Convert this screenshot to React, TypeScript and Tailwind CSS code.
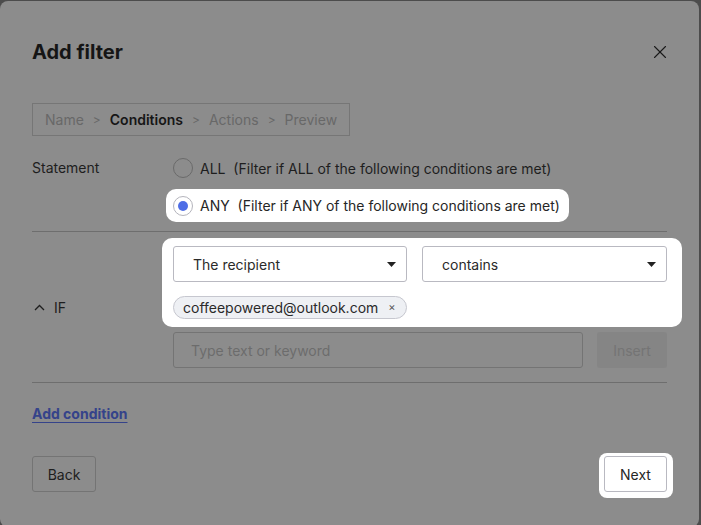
import { X } from "lucide-react";

function Caret() {
  return (
    <svg width="9" height="5" viewBox="0 0 9 5" className="shrink-0">
      <path d="M0 0h9L4.5 5z" fill="#222" />
    </svg>
  );
}

function Radio({ checked, dim }: { checked?: boolean; dim?: boolean }) {
  return (
    <span
      className={`flex h-[20px] w-[20px] shrink-0 items-center justify-center rounded-full border ${
        dim ? "border-[#6a6a6a]" : "border-[#b4b4bc] bg-white"
      }`}
    >
      {checked && <span className="h-[10px] w-[10px] rounded-full bg-[#4f6ee6]" />}
    </span>
  );
}

function Select({ label, className }: { label: string; className: string }) {
  return (
    <div
      className={`flex h-[36px] items-center justify-between rounded-[3px] border border-[#b9b9c1] bg-white pl-[19px] pr-[10px] text-[14px] text-[#2a2a2a] ${className}`}
    >
      <span>{label}</span>
      <Caret />
    </div>
  );
}

export default function App() {
  return (
    <div className="h-[525px] w-[701px] overflow-hidden bg-[#4c4c4c] font-['Inter',sans-serif]">
      <div className="mt-[1px] h-[526px] w-[699px] rounded-[8px] bg-[#8c8c8c] pl-[32px] pr-[32px]">
        <div className="flex items-center justify-between pt-[37px]">
          <h1 className="text-[20px] leading-[28px] font-bold text-[#151515]">Add filter</h1>
          <X className="mr-[-4px] h-[22px] w-[22px] text-[#1a1a1a]" strokeWidth={1.2} />
        </div>

        <div className="mt-[37px] inline-flex h-[33px] items-center gap-[9px] border border-[#767676] px-[12px] text-[14px] text-[#686868]">
          <span>Name</span>
          <span className="text-[12px]">&gt;</span>
          <span className="font-semibold text-[#161616]">Conditions</span>
          <span className="text-[12px]">&gt;</span>
          <span>Actions</span>
          <span className="text-[12px]">&gt;</span>
          <span>Preview</span>
        </div>

        <div className="mt-[22px] grid grid-cols-[141px_1fr] text-[14px] text-[#1e1e1e]">
          <div className="pt-[1px] leading-[18px]">Statement</div>
          <div className="flex flex-col items-start">
            <div className="flex h-[20px] items-center gap-[7px]">
              <Radio dim />
              <span className="whitespace-pre">ALL  (Filter if ALL of the following conditions are met)</span>
            </div>
            <div className="ml-[-7px] mt-[11px] flex h-[33px] items-center gap-[7px] rounded-[10px] bg-white pl-[7px] pr-[9px] text-[#262626]">
              <Radio checked />
              <span className="whitespace-pre">ANY  (Filter if ANY of the following conditions are met)</span>
            </div>
          </div>
        </div>

        <div className="mt-[9px] h-px bg-[#6e6e6e]" />

        <div className="mt-[6px] grid grid-cols-[141px_1fr]">
          <div className="flex items-center gap-[9px] pl-[2px] pt-[8px] text-[14px] text-[#1e1e1e]">
            <svg width="11" height="7" viewBox="0 0 11 7">
              <path d="M1 6l4.5-4.5L10 6" fill="none" stroke="#1e1e1e" strokeWidth="1.3" />
            </svg>
            <span>IF</span>
          </div>
          <div className="flex flex-col">
            <div className="ml-[-11px] mr-[-15px] flex flex-col items-start rounded-[10px] bg-white pb-[8px] pl-[11px] pr-[15px] pt-[8px]">
              <div className="flex w-full gap-[15px]">
                <Select label="The recipient" className="w-[234px]" />
                <Select label="contains" className="flex-1" />
              </div>
              <div className="mt-[14px] flex h-[23px] items-center gap-[10px] rounded-full border border-[#c6c7cf] bg-[#eef0f4] pl-[9px] pr-[10px] text-[14px] text-[#2a2a2a]">
                <span>coffeepowered@outlook.com</span>
                <span className="text-[11px] text-[#555]">×</span>
              </div>
            </div>
            <div className="mt-[5px] flex gap-[14px]">
              <div className="flex h-[36px] flex-1 items-center rounded-[3px] border border-[#747474] pl-[17px] text-[14px] text-[#6c6c6c]">
                Type text or keyword
              </div>
              <div className="flex h-[36px] w-[70px] items-center justify-center rounded-[3px] bg-[#858585] text-[14px] text-[#747474]">
                Insert
              </div>
            </div>
          </div>
        </div>

        <div className="mt-[14px] h-px bg-[#6e6e6e]" />

        <div className="mt-[18px]">
          <span className="text-[14px] font-bold text-[#35438a] underline underline-offset-[3px]">Add condition</span>
        </div>

        <div className="mt-[28px] flex items-start justify-between">
          <div className="mt-[3px] flex h-[36px] w-[64px] items-center justify-center rounded-[3px] border border-[#747474] text-[14px] text-[#1e1e1e]">
            Back
          </div>
          <div className="mr-[-6px] rounded-[8px] bg-white pb-[6px] pl-[5px] pr-[6px] pt-[3px]">
            <div className="flex h-[36px] w-[63px] items-center justify-center rounded-[3px] border border-[#b9b9c1] text-[14px] text-[#262626]">
              Next
            </div>
          </div>
        </div>
      </div>
    </div>
  );
}
